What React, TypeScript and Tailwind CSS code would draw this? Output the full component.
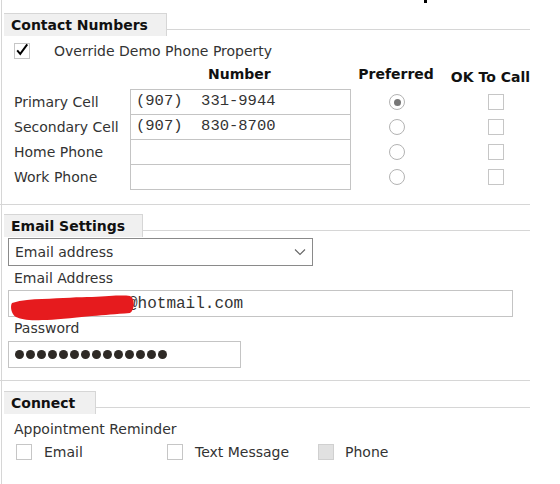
import React from "react";

const TabHeader = ({ title, tabClass }: { title: string; tabClass: string }) => (
  <div className="flex items-start">
    <div
      className={`ml-[2px] h-[23px] shrink-0 bg-[#f0f0f0] border-t border-r border-[#d6d6d6] pl-[7px] leading-[22px] font-bold text-[#111] ${tabClass}`}
    >
      {title}
    </div>
    <div className="flex-1 h-[17px] border-b border-[#d6d6d6]" />
  </div>
);

const Divider = () => <div className="-ml-[2px] h-px bg-[#d6d6d6]" />;

const Box = ({ filled = false }: { filled?: boolean }) => (
  <div
    className={`w-[16px] h-[16px] shrink-0 border ${
      filled ? "bg-[#e1e1e1] border-[#d0d0d0]" : "bg-white border-[#c6c6c6]"
    }`}
  />
);

const Radio = ({ checked = false }: { checked?: boolean }) => (
  <div className="w-[16px] h-[16px] rounded-full border border-[#b3b3b3] bg-white flex items-center justify-center">
    {checked && <div className="w-[7px] h-[7px] rounded-full bg-[#777]" />}
  </div>
);

const phones = [
  { label: "Primary Cell", value: "(907)  331-9944", preferred: true },
  { label: "Secondary Cell", value: "(907)  830-8700", preferred: false },
  { label: "Home Phone", value: "", preferred: false },
  { label: "Work Phone", value: "", preferred: false },
];

export default function App() {
  return (
    <div className="relative w-[560px] h-[484px] overflow-hidden bg-white font-['DejaVu_Sans',sans-serif] text-[14px] text-[#333]">
      <div className="absolute left-[424px] top-0 w-[3px] h-[3px] bg-black" />
      <div className="ml-px w-[529px] h-[484px] border-l border-[#d6d6d6]">
        {/* Contact Numbers */}
        <div className="pt-[13px]">
          <TabHeader title="Contact Numbers" tabClass="w-[163px]" />
          <div className="mt-[7px] ml-[12px] flex items-center h-[16px]">
            <div className="w-[16px] h-[16px] border border-[#c6c6c6] flex items-center justify-center">
              <svg width="16" height="16" viewBox="0 0 16 16" className="-mt-[3px]">
                <path d="M2.5 8.5 L6 12.5 L14 1.5" fill="none" stroke="#000" strokeWidth="2.2" />
              </svg>
            </div>
            <span className="ml-[24px] leading-[17px]">Override Demo Phone Property</span>
          </div>
          <div className="mt-[7px] flex h-[17px] leading-[17px] font-bold text-[#111]">
            <div className="w-[128px]" />
            <div className="w-[221px] text-center">Number</div>
            <div className="w-[92px] text-center pl-[2px]">Preferred</div>
            <div className="pl-[10px] pt-[3px] whitespace-nowrap">OK To Call</div>
          </div>
          <div className="mt-[6px]">
            {phones.map((p, i) => (
              <div key={p.label} className={`flex items-center h-[26px] ${i > 0 ? "-mt-px" : ""}`}>
                <div className="w-[128px] pl-[12px] leading-[17px]">{p.label}</div>
                <div className="w-[221px] h-[26px] border border-[#c4c4c4] pl-[5px] flex items-center font-['Liberation_Mono',monospace] text-[15.5px] whitespace-pre text-[#333]">
                  {p.value}
                </div>
                <div className="w-[92px] flex justify-center">
                  <Radio checked={p.preferred} />
                </div>
                <div className="pl-[45px]">
                  <Box />
                </div>
              </div>
            ))}
          </div>
          <div className="h-[14px]" />
        </div>
        <Divider />

        {/* Email Settings */}
        <div className="pt-[9px]">
          <TabHeader title="Email Settings" tabClass="w-[139px]" />
          <div className="mt-px ml-[6px] w-[305px] h-[28px] border border-[#8a8a8a] flex items-center justify-between pl-[6px] pr-[6px]">
            <span className="leading-[17px]">Email address</span>
            <svg width="12" height="8" viewBox="0 0 12 8">
              <path d="M1 1.5 L6 6.5 L11 1.5" fill="none" stroke="#666" strokeWidth="1.1" />
            </svg>
          </div>
          <div className="mt-[4px] ml-[12px] h-[17px] leading-[17px]">Email Address</div>
          <div className="relative mt-[3px] ml-[6px] w-[505px] h-[27px] border border-[#c4c4c4] flex items-center">
            <svg
              width="126"
              height="28"
              viewBox="0 0 126 28"
              className="absolute left-[1px] top-[2px] overflow-visible"
            >
              <path
                d="M2 10 C12 7 22 6 32 6 C52 5 70 4 82 4 C100 3 112 2 120 3 C125 5 125 17 120 20 C105 21 95 22 82 23 C60 25 45 27 32 27 C20 28 10 26 6 24 C1 21 0 13 2 10 Z"
                fill="#e61b1e"
              />
            </svg>
            <span className="ml-[119px] font-['Liberation_Mono',monospace] text-[16px] text-[#333]">
              @hotmail.com
            </span>
          </div>
          <div className="mt-[3px] ml-[12px] h-[17px] leading-[17px]">Password</div>
          <div className="mt-[4px] ml-[6px] w-[233px] h-[27px] border border-[#c4c4c4] flex items-center pl-[6px] gap-[2px]">
            {Array.from({ length: 14 }).map((_, i) => (
              <div key={i} className="w-[9px] h-[9px] rounded-full bg-[#2e2a26]" />
            ))}
          </div>
          <div className="h-[12px]" />
        </div>
        <Divider />

        {/* Connect */}
        <div className="pt-[10px]">
          <TabHeader title="Connect" tabClass="w-[92px]" />
          <div className="mt-[7px] ml-[12px] h-[17px] leading-[17px]">Appointment Reminder</div>
          <div className="mt-[6px] ml-[14px] flex items-center h-[16px]">
            <div className="w-[151px] flex items-center">
              <Box />
              <span className="ml-[12px] leading-[17px]">Email</span>
            </div>
            <div className="w-[151px] flex items-center">
              <Box />
              <span className="ml-[12px] leading-[17px]">Text Message</span>
            </div>
            <div className="flex items-center">
              <Box filled />
              <span className="ml-[11px] leading-[17px]">Phone</span>
            </div>
          </div>
        </div>
      </div>
    </div>
  );
}
